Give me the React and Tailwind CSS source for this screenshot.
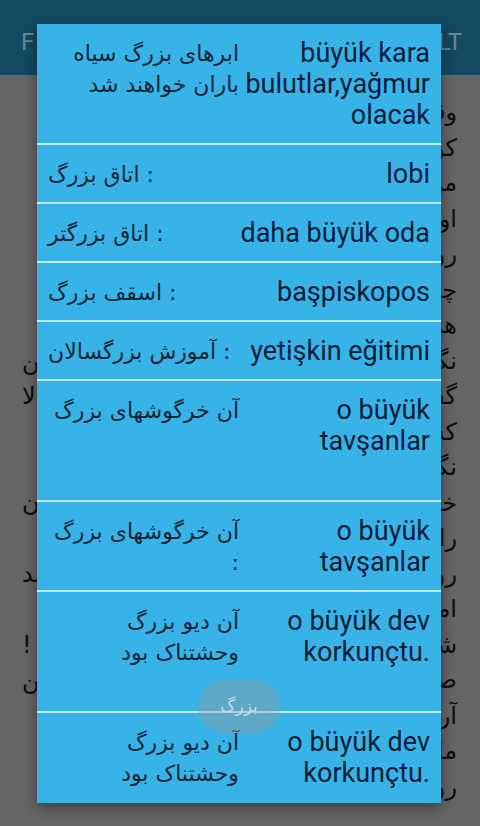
const rows = [
  { fa: ['ابرهای بزرگ سیاه', 'باران خواهند شد'], tr: 'büyük kara bulutlar,yağmur olacak' },
  { fa: [': اتاق بزرگ'], tr: 'lobi' },
  { fa: [': اتاق بزرگتر'], tr: 'daha büyük oda' },
  { fa: [': اسقف بزرگ'], tr: 'başpiskopos' },
  { fa: [': آموزش بزرگسالان'], tr: 'yetişkin eğitimi' },
  { fa: ['آن خرگوشهای بزرگ', '\u00a0', '\u00a0'], tr: 'o büyük tavşanlar' },
  { fa: ['آن خرگوشهای بزرگ', ':'], tr: 'o büyük tavşanlar' },
  { fa: ['آن دیو بزرگ', 'وحشتناک بود', '\u00a0'], tr: 'o büyük dev korkunçtu.' },
  { fa: ['آن دیو بزرگ', 'وحشتناک بود'], tr: 'o büyük dev korkunçtu.' },
];

const pageLines = [
  { start: 'وقتی باران' },
  { start: 'کودک کوچک' },
  { start: 'من به خانه' },
  { start: 'او گفت که' },
  { start: 'روز بعد' },
  { start: 'چه کسی' },
  { start: 'هر روز' },
  { start: 'نگاه کرد', end: 'من' },
  { start: 'گفت که', end: 'بالا' },
  { start: 'که او' },
  { start: 'نگران بود' },
  { start: 'خانه ما', end: 'آن' },
  { start: 'راه دور' },
  { start: 'روی میز', end: 'شد' },
  { start: 'اما هنوز' },
  { start: 'شب بود', end: '!' },
  { start: 'صبح زود', end: 'کن' },
  { start: 'آرام باش' },
  { start: 'ما رفتیم' },
  { start: 'رود بزرگ' },
];

function Row({ row }) {
  return (
    <div className="grid grid-cols-2 px-[11px] pt-[14px] pb-[12px]">
      <div
        dir="rtl"
        className={`${row.fa.length > 1 ? 'w-full' : 'w-fit'} whitespace-nowrap text-[22px] leading-[31px] text-[#132638]`}
        style={{ fontFamily: '"DejaVu Sans", sans-serif' }}
      >
        {row.fa.map((l, i) => (
          <div key={i}>{l}</div>
        ))}
      </div>
      <div
        className="text-right text-[27px] leading-[31px] text-[#091d38]"
        style={{ fontFamily: 'Roboto, sans-serif' }}
      >
        {row.tr}
      </div>
    </div>
  );
}

export default function App() {
  return (
    <div className="relative w-[480px] h-[826px] overflow-hidden bg-[#666666]">
      <header
        className="flex h-[75px] items-center justify-between bg-[#134a61] pl-[21px] pr-[18px] pt-[8px] text-[24px] text-[#6a8894]"
        style={{ fontFamily: 'Roboto, sans-serif' }}
      >
        <span className="tracking-[5px]">FARSI</span>
        <span>RESULT</span>
      </header>

      <div
        className="pt-[20px] text-[24px] text-[#0d0d0d]"
        style={{ fontFamily: '"DejaVu Sans", sans-serif' }}
      >
        {pageLines.map((l, i) => (
          <div key={i} dir="rtl" className="flex h-[35.5px] items-center justify-between pl-[22px] pr-[23px] leading-[35.5px]">
            <span>{l.start}</span>
            {l.end && <span>{l.end}</span>}
          </div>
        ))}
      </div>

      <div className="absolute left-[37px] top-[24px] h-[779px] w-[404px] overflow-hidden bg-[#38b3e8] shadow-[0_4px_14px_rgba(0,0,0,0.45)]">
        {rows.map((row, i) => (
          <div key={i}>
            {i > 0 && <div className="h-[2px] bg-[#c4ebfb]" />}
            <Row row={row} />
          </div>
        ))}
      </div>

      <div
        className="absolute left-[198px] top-[680px] flex h-[53px] w-[82px] items-center justify-center rounded-full bg-[rgba(150,150,150,0.4)] text-[17px] text-[#c0dcea]"
        style={{ fontFamily: '"DejaVu Sans", sans-serif' }}
      >
        بزرگ
      </div>
    </div>
  );
}
